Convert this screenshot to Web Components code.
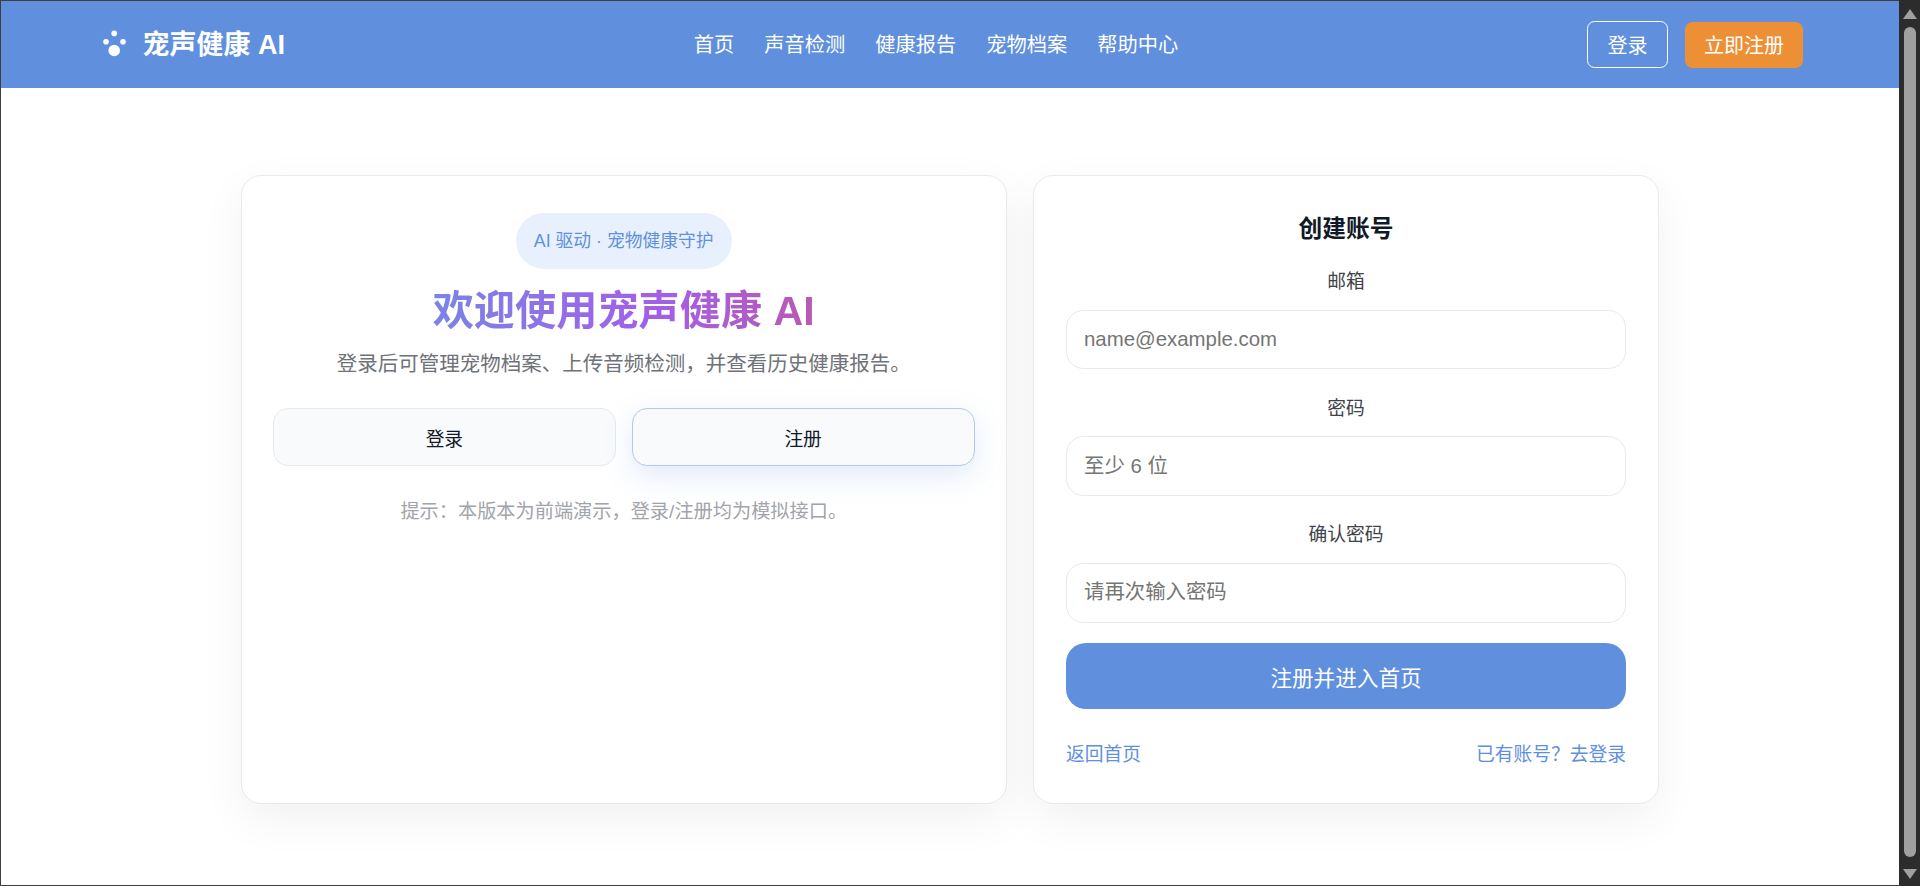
<!DOCTYPE html>
<html lang="zh-CN">
<head>
<meta charset="utf-8">
<title>宠声健康 AI</title>
<style>
  html, body { margin: 0; height: 100%; overflow: hidden; background: #fff; }
  body { font-family: "Liberation Sans", "Noto Sans CJK SC", sans-serif; }
</style>
</head>
<body>
<pv-window>
  <pv-header>
    <pv-nav-link>首页</pv-nav-link>
    <pv-nav-link>声音检测</pv-nav-link>
    <pv-nav-link>健康报告</pv-nav-link>
    <pv-nav-link>宠物档案</pv-nav-link>
    <pv-nav-link>帮助中心</pv-nav-link>
  </pv-header>
  <pv-main>
    <pv-welcome-card></pv-welcome-card>
    <pv-register-card>
      <pv-field label="邮箱" placeholder="name@example.com"></pv-field>
      <pv-field label="密码" placeholder="至少 6 位"></pv-field>
      <pv-field label="确认密码" placeholder="请再次输入密码"></pv-field>
    </pv-register-card>
  </pv-main>
</pv-window>

<script>
function define(name, html) {
  customElements.define(name, class extends HTMLElement {
    constructor() {
      super();
      this.attachShadow({ mode: 'open' }).innerHTML = html;
    }
  });
}

define('pv-window', `
<style>
  :host { display: flex; box-sizing: border-box; height: 100vh; background: #fff;
          border-top: 1px solid #3f3f3f; border-left: 1px solid #3f3f3f; border-bottom: 1px solid #3f3f3f; }
  .page { flex: 1; min-width: 0; display: flex; flex-direction: column; }
</style>
<div class="page"><slot></slot></div>
<pv-scrollbar></pv-scrollbar>`);

define('pv-scrollbar', `
<style>
  :host { flex: 0 0 21px; display: flex; flex-direction: column; align-items: center;
          background: #2c2c2c; margin-top: -1px; margin-bottom: -1px; padding: 9px 0 7px; box-sizing: border-box; }
  svg { display: block; flex: none; }
  .thumb { flex: 1; width: 12px; background: #a0a0a0; border-radius: 6px; margin: 8px 0 12px; }
</style>
<svg width="14" height="10" viewBox="0 0 14 10"><path d="M7 0 L14 10 L0 10 Z" fill="#a0a0a0"/></svg>
<div class="thumb"></div>
<svg width="14" height="10" viewBox="0 0 14 10"><path d="M0 0 L14 0 L7 10 Z" fill="#a0a0a0"/></svg>`);

define('pv-header', `
<style>
  :host { flex: none; height: 87px; box-sizing: border-box; padding: 0 96px; background: #6090dd; color: #fff;
          display: flex; align-items: center; justify-content: space-between; }
  .brand { display: flex; align-items: center; gap: 15.5px; font-size: 27px; font-weight: 700; white-space: nowrap; }
  .brand span { line-height: 30px; }
  svg { display: block; }
  nav { display: flex; gap: 30px; }
  .actions { display: flex; align-items: center; gap: 17px; font-size: 20px; }
  .btn { box-sizing: border-box; height: 47px; display: flex; align-items: center; justify-content: center; border-radius: 7.5px; }
  .ghost { width: 81px; border: 1.25px solid #fff; }
  .cta { width: 118px; height: 46px; background: #ed8f35; }
</style>
<div class="brand">
  <svg width="30" height="30" viewBox="0 0 30 30" fill="#fff" aria-hidden="true">
    <circle cx="17.2" cy="3.4" r="2.8"/><circle cx="9" cy="11.8" r="2.8"/><circle cx="26" cy="11.8" r="2.8"/><circle cx="17.2" cy="20.5" r="5.8"/>
  </svg>
  <span>宠声健康 AI</span>
</div>
<nav><slot></slot></nav>
<div class="actions"><div class="btn ghost">登录</div><div class="btn cta">立即注册</div></div>`);

define('pv-nav-link', `
<style>:host { display: block; font-size: 20.25px; line-height: 30px; color: #fff; white-space: nowrap; }</style><slot></slot>`);

define('pv-main', `
<style>
  :host { flex: 1; min-height: 0; display: flex; justify-content: center; align-items: flex-start; gap: 26.5px; padding-top: 87px; }
</style><slot></slot>`);

const cardBase = `
  :host { display: block; box-sizing: border-box; height: 629px; background: #fff; border: 1px solid #e8eaee;
          border-radius: 20px; box-shadow: 0 15px 45px rgba(17,24,39,.06); }`;

define('pv-welcome-card', `
<style>${cardBase}
  :host { flex: 0 0 765.5px; padding: 37px 31px; text-align: center; }
  .pill { display: inline-block; box-sizing: border-box; height: 56px; line-height: 57px; padding: 0 18px; border-radius: 28px;
          background: #e8f0fd; color: #6090dd; font-size: 17.8px; vertical-align: top; }
  h1 { margin: 17px 0 0; font-size: 41.2px; line-height: 50px; font-weight: 700; }
  h1 span { display: inline-block; background: linear-gradient(90deg, #7a84e6 0%, #a35fe8 58%, #b95ab0 100%);
            -webkit-background-clip: text; background-clip: text; color: transparent; -webkit-text-fill-color: transparent; }
  p { margin: 13px 0 0; font-size: 20.5px; line-height: 30px; color: #6f7278; }
  .row { display: flex; gap: 16px; margin-top: 29px; }
  .choice { flex: 1; box-sizing: border-box; height: 58px; display: flex; align-items: center; justify-content: center;
            background: #f8fafc; border: 1.25px solid #e7e9ee; border-radius: 15px; font-size: 18.75px; color: #111827; }
  .choice.on { border-color: #b4c9ee; box-shadow: 0 10px 30px rgba(96,144,221,.18); }
  p.hint { margin-top: 31px; font-size: 19.2px; color: #a2a4aa; }
</style>
<div class="pill">AI 驱动 · 宠物健康守护</div>
<h1><span>欢迎使用宠声健康 AI</span></h1>
<p>登录后可管理宠物档案、上传音频检测，并查看历史健康报告。</p>
<div class="row"><div class="choice">登录</div><div class="choice on">注册</div></div>
<p class="hint">提示：本版本为前端演示，登录/注册均为模拟接口。</p>`);

define('pv-register-card', `
<style>${cardBase}
  :host { flex: 0 0 626px; padding: 38px 32px 0; }
  h2 { margin: 0 0 24px; font-size: 23.75px; line-height: 30px; font-weight: 700; color: #111827; text-align: center; }
  .fields { display: flex; flex-direction: column; gap: 25.4px; }
  .submit { margin-top: 20.4px; height: 66px; display: flex; align-items: center; justify-content: center;
            background: #6090dd; color: #fff; border-radius: 20px; font-size: 21.6px; }
  .links { margin-top: 33px; display: flex; justify-content: space-between; font-size: 18.75px; line-height: 26px; color: #6090dd; }
</style>
<h2>创建账号</h2>
<div class="fields"><slot></slot></div>
<div class="submit">注册并进入首页</div>
<div class="links"><span>返回首页</span><span>已有账号？去登录</span></div>`);

customElements.define('pv-field', class extends HTMLElement {
  constructor() {
    super();
    const root = this.attachShadow({ mode: 'open' });
    root.innerHTML = `
<style>
  :host { display: block; }
  label { display: block; text-align: center; font-size: 18.75px; line-height: 28px; color: #3f434a; margin-bottom: 13.7px; }
  input { display: block; box-sizing: border-box; width: 100%; height: 59.6px; padding: 0 17px; margin: 0;
          border: 1.25px solid #e7e9ee; border-radius: 17.5px; background: #fff; outline: none;
          font: 20.4px "Liberation Sans", "Noto Sans CJK SC", sans-serif; color: #111827; }
  input::placeholder { color: #757575; opacity: 1; }
</style>
<label></label><input>`;
    root.querySelector('label').textContent = this.getAttribute('label');
    const input = root.querySelector('input');
    input.placeholder = this.getAttribute('placeholder');
    input.setAttribute('aria-label', this.getAttribute('label'));
  }
});
</script>
</body>
</html>
